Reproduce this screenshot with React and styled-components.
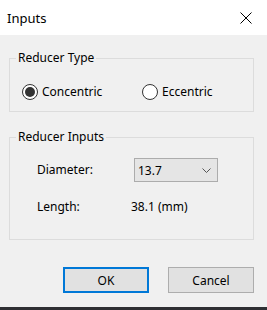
import styled, { createGlobalStyle } from "styled-components";

const Global = createGlobalStyle`
  html, body {
    margin: 0;
    padding: 0;
    background: #f0f0f0;
  }
  body {
    font-family: "Noto Sans", "Open Sans", sans-serif;
  }
`;

const Window = styled.div`
  width: 267px;
  height: 310px;
  display: flex;
  flex-direction: column;
  background: #f0f0f0;
  color: #000;
  font-size: 12px;
  overflow: hidden;
`;

const TitleBar = styled.div`
  height: 35px;
  flex: none;
  background: #fff;
  display: flex;
  align-items: center;
  justify-content: space-between;
  padding: 0 15px 0 7px;
  font-size: 13px;
`;

const Body = styled.div`
  flex: 1;
  padding: 15px 13px 0 9px;
  display: flex;
  flex-direction: column;
`;

const Group = styled.fieldset`
  margin: ${(p) => p.$top || 0}px 0 0 0;
  padding: ${(p) => p.$pt}px 6px ${(p) => p.$pb}px 6px;
  border: 1px solid #dcdcdc;
  min-width: 0;
`;

const Legend = styled.legend`
  padding: 0 2px;
  line-height: 16px;
  font-size: 12px;
`;

const RadioRow = styled.div`
  display: flex;
  align-items: center;
  padding-left: 6px;
  height: 16px;
`;

const Radio = styled.label`
  display: flex;
  align-items: center;
  gap: 4px;
  width: ${(p) => p.$w}px;
  line-height: 16px;
`;

const Circle = styled.span`
  width: 14px;
  height: 14px;
  border: 1px solid #333;
  border-radius: 50%;
  background: #fff;
  display: flex;
  align-items: center;
  justify-content: center;
  flex: none;

  &::after {
    content: "";
    width: 10px;
    height: 10px;
    border-radius: 50%;
    background: ${(p) => (p.$on ? "#333" : "transparent")};
  }
`;

const FieldGrid = styled.div`
  display: grid;
  grid-template-columns: 94px 1fr;
  align-items: center;
  row-gap: 17px;
  padding-left: 21px;
`;

const Label = styled.span`
  line-height: 16px;
`;

const Select = styled.div`
  width: 82px;
  height: 22px;
  margin-left: 3px;
  border: 1px solid #acacac;
  background: #e5e5e5;
  display: flex;
  align-items: center;
  justify-content: space-between;
  padding: 0 6px 0 3px;
  box-sizing: content-box;
  box-sizing: border-box;
  width: 84px;
  height: 24px;
`;

const Buttons = styled.div`
  margin-top: 27px;
  display: flex;
  justify-content: flex-end;
  gap: 19px;
`;

const Button = styled.button`
  width: 86px;
  height: 26px;
  box-sizing: border-box;
  font-family: inherit;
  font-size: 12px;
  color: #000;
  background: #e1e1e1;
  border: ${(p) => (p.$primary ? "2px solid #0078d7" : "1px solid #adadad")};
  padding: 0;
`;

const Strip = styled.div`
  height: 3px;
  flex: none;
  background: #2e2f33;
`;

const CloseIcon = () => (
  <svg width="12" height="12" viewBox="0 0 12 12">
    <path d="M0.5 0.5 L11.5 11.5 M11.5 0.5 L0.5 11.5" stroke="#000" strokeWidth="1" fill="none" />
  </svg>
);

const Chevron = () => (
  <svg width="9" height="5" viewBox="0 0 9 5">
    <path d="M0.5 0.5 L4.5 4.5 L8.5 0.5" stroke="#555" strokeWidth="1" fill="none" />
  </svg>
);

export default function App() {
  return (
    <Window>
      <Global />
      <TitleBar>
        <span>Inputs</span>
        <CloseIcon />
      </TitleBar>
      <Body>
        <Group $pt={18} $pb={11}>
          <Legend>Reducer Type</Legend>
          <RadioRow>
            <Radio $w={120}>
              <Circle $on />
              Concentric
            </Radio>
            <Radio $w={80}>
              <Circle />
              Eccentric
            </Radio>
          </RadioRow>
        </Group>
        <Group $top={17} $pt={13} $pb={24}>
          <Legend>Reducer Inputs</Legend>
          <FieldGrid>
            <Label>Diameter:</Label>
            <Select>
              <span>13.7</span>
              <Chevron />
            </Select>
            <Label>Length:</Label>
            <Label>38.1 (mm)</Label>
          </FieldGrid>
        </Group>
        <Buttons>
          <Button $primary>OK</Button>
          <Button>Cancel</Button>
        </Buttons>
      </Body>
      <Strip />
    </Window>
  );
}
